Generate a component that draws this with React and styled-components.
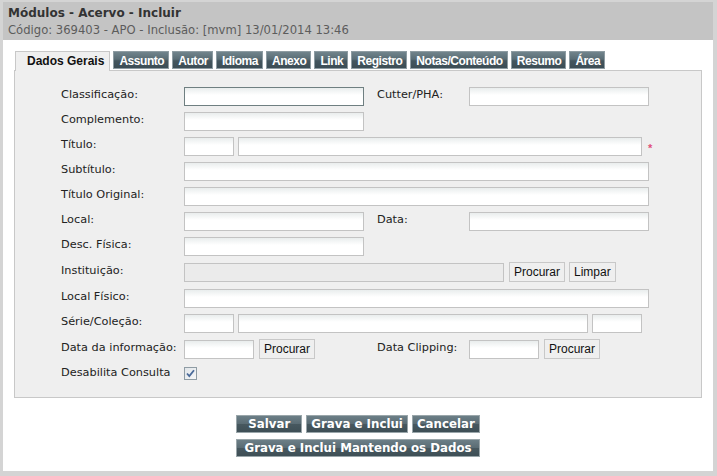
import React from "react";
import styled, { createGlobalStyle } from "styled-components";

const Global = createGlobalStyle`
  html, body { margin: 0; padding: 0; }
  body { background: #d4d4d4; font-family: "DejaVu Sans", Verdana, sans-serif; }
  #root { width: 717px; height: 476px; overflow: hidden; }
`;

const Page = styled.div`
  margin: 2px 4px 0 3px;
  height: 469px;
  background: #ffffff;
  display: flex;
  flex-direction: column;
`;

const Header = styled.div`
  background: #c4c4c4;
  height: 38px;
  box-sizing: border-box;
  padding: 3px 5px 0;
`;

const Title = styled.div`
  font-family: "DejaVu Sans", Verdana, sans-serif;
  font-weight: bold;
  font-size: 12px;
  line-height: 17px;
  color: #333;
`;

const Sub = styled.div`
  font-family: "DejaVu Sans", Verdana, sans-serif;
  font-size: 11.6px;
  line-height: 16px;
  color: #5c5c5c;
`;

const Body = styled.div`
  padding: 11px 11px 0;
`;

const Tabs = styled.div`
  display: flex;
  align-items: flex-end;
  height: 19px;
  padding-left: 1px;
  position: relative;
  z-index: 1;
`;

const Tab = styled.div`
  box-sizing: border-box;
  height: ${(p) => (p.$active ? 20 : 18)}px;
  margin-bottom: ${(p) => (p.$active ? -1 : 1)}px;
  margin-right: 3px;
  padding: ${(p) => (p.$active ? "0 5px 0 11px" : "0 4px 0 5px")};
  font-family: "Liberation Sans", Arial, sans-serif;
  font-weight: bold;
  font-size: 12px;
  letter-spacing: ${(p) => (p.$active ? "0" : "-0.45px")};
  line-height: 18px;
  white-space: nowrap;
  color: ${(p) => (p.$active ? "#111" : "#ffffff")};
  background: ${(p) =>
    p.$active
      ? "#efefef"
      : "linear-gradient(#71848c 0%, #5a6d75 45%, #44565e 55%, #3c4d55 100%)"};
  border: 1px solid ${(p) => (p.$active ? "#c8c8c8" : "#8e9ca2")};
  border-bottom: ${(p) => (p.$active ? "none" : "1px solid #8e9ca2")};
`;

const Panel = styled.div`
  background: #efefef;
  border: 1px solid #c8c8c8;
  padding: 13px 0 13px 46px;
  display: flex;
  flex-direction: column;
`;

const Row = styled.div`
  display: flex;
  align-items: center;
  height: ${(p) => p.$h || 25}px;
`;

const Label = styled.span`
  flex: none;
  width: ${(p) => p.$w || 123}px;
  margin-left: ${(p) => p.$ml || 0}px;
  padding-bottom: ${(p) => p.$pb ?? 4}px;
  font-family: "DejaVu Sans", Verdana, sans-serif;
  font-size: 11.3px;
  line-height: 13px;
  color: #222;
  white-space: nowrap;
`;

const Field = styled.input`
  flex: none;
  box-sizing: border-box;
  width: ${(p) => p.$w}px;
  height: 19px;
  margin: 0 ${(p) => p.$mr || 0}px 0 0;
  padding: 0 3px;
  border: 1px solid ${(p) => (p.$focus ? "#6f7f81" : "#c3c3c3")};
  background: ${(p) =>
    p.disabled ? "#ebebeb" : "linear-gradient(#e9eded 0px, #ffffff 7px)"};
  outline: none;
  font-family: "DejaVu Sans", Verdana, sans-serif;
  font-size: 11px;
`;

const SmallButton = styled.button`
  flex: none;
  box-sizing: border-box;
  height: 20px;
  margin-right: 4px;
  padding: 0 4px;
  border: 1px solid #c8c8c8;
  background: #efefef;
  font-family: "Liberation Sans", Arial, sans-serif;
  font-size: 12px;
  color: #111;
  cursor: pointer;
`;

const Star = styled.span`
  margin-left: 6px;
  margin-top: 4px;
  color: #e0507a;
  font-family: "Liberation Sans", Arial, sans-serif;
  font-size: 11px;
  line-height: 11px;
  font-weight: bold;
`;

const Check = styled.span`
  display: inline-flex;
  width: 13px;
  height: 13px;
`;

const Actions = styled.div`
  align-self: center;
  margin-top: 17px;
  display: flex;
  flex-direction: column;
  gap: 6px;
`;

const ActionRow = styled.div`
  display: flex;
  gap: 4px;
`;

const ActionButton = styled.button`
  box-sizing: border-box;
  height: 18px;
  min-width: ${(p) => p.$min || 0}px;
  padding: 0 4px;
  flex: ${(p) => (p.$grow ? "1 1 auto" : "none")};
  border: 1px solid #9aa6aa;
  background: linear-gradient(#6c7f87 0%, #5a6c74 48%, #47585f 52%, #3e4f56 100%);
  color: #fff;
  font-family: "DejaVu Sans", Verdana, sans-serif;
  font-weight: bold;
  font-size: 11.8px;
  line-height: 16px;
  white-space: nowrap;
  cursor: pointer;
`;

const tabs = [
  "Assunto",
  "Autor",
  "Idioma",
  "Anexo",
  "Link",
  "Registro",
  "Notas/Conteúdo",
  "Resumo",
  "Área",
];

const CheckIcon = () => (
  <Check>
    <svg width="13" height="13" viewBox="0 0 13 13">
      <defs>
        <linearGradient id="cb" x1="0" y1="0" x2="1" y2="1">
          <stop offset="0" stopColor="#dfe4e8" />
          <stop offset="1" stopColor="#f7f8f9" />
        </linearGradient>
      </defs>
      <rect x="0.5" y="0.5" width="12" height="12" fill="url(#cb)" stroke="#8f9ca4" />
      <path d="M3 6.5 L5.3 9 L10 3.2" fill="none" stroke="#4a6a9a" strokeWidth="1.8" />
    </svg>
  </Check>
);

export default function App() {
  return (
    <>
      <Global />
      <Page>
        <Header>
          <Title>Módulos - Acervo - Incluir</Title>
          <Sub>Código: 369403 - APO - Inclusão: [mvm] 13/01/2014 13:46</Sub>
        </Header>
        <Body>
          <Tabs>
            <Tab $active>Dados Gerais</Tab>
            {tabs.map((t) => (
              <Tab key={t}>{t}</Tab>
            ))}
          </Tabs>
          <Panel>
            <Row>
              <Label>Classificação:</Label>
              <Field $w={180} $focus />
              <Label $ml={13} $w={92}>Cutter/PHA:</Label>
              <Field $w={180} />
            </Row>
            <Row>
              <Label>Complemento:</Label>
              <Field $w={180} />
            </Row>
            <Row>
              <Label>Título:</Label>
              <Field $w={50} $mr={4} />
              <Field $w={404} />
              <Star>*</Star>
            </Row>
            <Row>
              <Label>Subtítulo:</Label>
              <Field $w={465} />
            </Row>
            <Row>
              <Label>Título Original:</Label>
              <Field $w={465} />
            </Row>
            <Row>
              <Label>Local:</Label>
              <Field $w={180} />
              <Label $ml={13} $w={92}>Data:</Label>
              <Field $w={180} />
            </Row>
            <Row>
              <Label>Desc. Física:</Label>
              <Field $w={180} />
            </Row>
            <Row $h={26}>
              <Label>Instituição:</Label>
              <Field $w={320} $mr={5} disabled />
              <SmallButton>Procurar</SmallButton>
              <SmallButton>Limpar</SmallButton>
            </Row>
            <Row $h={26}>
              <Label>Local Físico:</Label>
              <Field $w={465} />
            </Row>
            <Row>
              <Label>Série/Coleção:</Label>
              <Field $w={50} $mr={4} />
              <Field $w={350} $mr={4} />
              <Field $w={50} />
            </Row>
            <Row $h={26}>
              <Label>Data da informação:</Label>
              <Field $w={70} $mr={5} />
              <SmallButton>Procurar</SmallButton>
              <Label $ml={58} $w={92}>Data Clipping:</Label>
              <Field $w={70} $mr={5} />
              <SmallButton>Procurar</SmallButton>
            </Row>
            <Row $h={22}>
              <Label $pb={1}>Desabilita Consulta</Label>
              <CheckIcon />
            </Row>
          </Panel>
        </Body>
        <Actions>
          <ActionRow>
            <ActionButton $min={66}>Salvar</ActionButton>
            <ActionButton $grow>Grava e Inclui</ActionButton>
            <ActionButton $min={66}>Cancelar</ActionButton>
          </ActionRow>
          <ActionRow>
            <ActionButton $grow>Grava e Inclui Mantendo os Dados</ActionButton>
          </ActionRow>
        </Actions>
      </Page>
    </>
  );
}
